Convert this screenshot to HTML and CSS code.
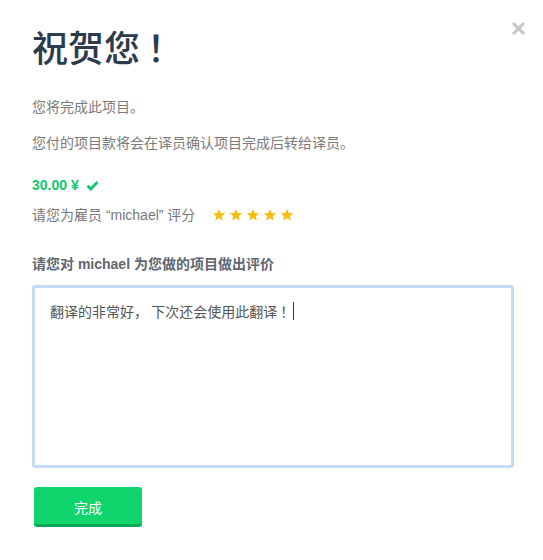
FILE: index.html
```html
<!DOCTYPE html>
<html lang="zh-CN">
<head>
<meta charset="utf-8">
<title>祝贺您</title>
<link rel="stylesheet" href="styles.css">
</head>
<body>
<div class="modal">
  <button class="close" aria-label="关闭">
    <svg width="13" height="13" viewBox="0 0 14 14"><path d="M2 2 L12 12 M12 2 L2 12" stroke="#c9c9c9" stroke-width="3.4" stroke-linecap="round"/></svg>
  </button>
  <h1 class="title">祝贺您<span class="bang">！</span></h1>
  <p class="text first">您将完成此项目。</p>
  <p class="text second">您付的项目款将会在译员确认项目完成后转给译员。</p>
  <div class="price">30.00 ¥
    <svg class="check" width="13" height="11" viewBox="0 0 13 11"><path d="M1.5 5.8 L4.8 9 L11.5 2" fill="none" stroke="#14c66b" stroke-width="2.8" stroke-linejoin="miter"/></svg>
  </div>
  <div class="rating">
    <span>请您为雇员 “michael” 评分</span>
    <span class="stars">
      <svg viewBox="0 0 24 24"><path d="M12 1.5l3.1 6.9 7.4.7-5.6 5 1.7 7.4L12 17.6l-6.6 3.9 1.7-7.4-5.6-5 7.4-.7z"/></svg>
      <svg viewBox="0 0 24 24"><path d="M12 1.5l3.1 6.9 7.4.7-5.6 5 1.7 7.4L12 17.6l-6.6 3.9 1.7-7.4-5.6-5 7.4-.7z"/></svg>
      <svg viewBox="0 0 24 24"><path d="M12 1.5l3.1 6.9 7.4.7-5.6 5 1.7 7.4L12 17.6l-6.6 3.9 1.7-7.4-5.6-5 7.4-.7z"/></svg>
      <svg viewBox="0 0 24 24"><path d="M12 1.5l3.1 6.9 7.4.7-5.6 5 1.7 7.4L12 17.6l-6.6 3.9 1.7-7.4-5.6-5 7.4-.7z"/></svg>
      <svg viewBox="0 0 24 24"><path d="M12 1.5l3.1 6.9 7.4.7-5.6 5 1.7 7.4L12 17.6l-6.6 3.9 1.7-7.4-5.6-5 7.4-.7z"/></svg>
    </span>
  </div>
  <div class="label">请您对 michael 为您做的项目做出评价</div>
  <div class="textarea"><span>翻译的非常好， 下次还会使用此翻译<span class="tbang">！</span></span><span class="caret"></span></div>
  <button class="done">完成</button>
</div>
</body>
</html>
```
FILE: styles.css
```css
html, body {
  margin: 0;
  padding: 0;
  background: #fff;
}
body {
  font-family: "Liberation Sans", "Noto Sans CJK SC", sans-serif;
  font-size: 14px;
  color: #777;
}
.modal {
  position: relative;
  padding: 24px 29px 0 32px;
  display: flex;
  flex-direction: column;
  align-items: flex-start;
}
.close {
  position: absolute;
  top: 22px;
  right: 18px;
  border: 0;
  background: none;
  padding: 0;
  width: 13px;
  height: 13px;
  display: block;
}
.close svg { display: block; }
.title {
  margin: 0;
  font-size: 36px;
  line-height: 44px;
  height: 44px;
  font-weight: 500;
  color: #2d3b4c;
  font-family: "Noto Sans CJK SC", sans-serif;
}
.bang {
  padding-left: 7px;
}
.tbang {
  padding-left: 3px;
}
.text {
  margin: 0;
  line-height: 20px;
  color: #7b7b7b;
  font-family: "Noto Sans CJK SC", sans-serif;
}
.first { margin-top: 28px; }
.second { margin-top: 16px; }
.price {
  margin-top: 23px;
  line-height: 20px;
  font-weight: bold;
  color: #14c66b;
  display: flex;
  align-items: center;
  gap: 7px;
}
.check { display: block; }
.rating {
  margin-top: 10px;
  line-height: 20px;
  display: flex;
  align-items: center;
  gap: 17px;
  color: #777;
}
.stars {
  display: flex;
  gap: 3px;
}
.stars svg {
  width: 14px;
  height: 14px;
  fill: #f7bf16;
  display: block;
}
.label {
  margin-top: 29px;
  line-height: 20px;
  font-weight: bold;
  color: #5f6670;
}
.textarea {
  margin-top: 11px;
  box-sizing: border-box;
  width: 482px;
  height: 183px;
  border: 3px solid #c3dbf4;
  border-radius: 3px;
  padding: 13px 15px;
  line-height: 20px;
  color: #555;
  font-family: "Noto Sans CJK SC", sans-serif;
  display: flex;
  align-items: flex-start;
}
.caret {
  display: inline-block;
  width: 1px;
  height: 18px;
  margin-top: 1px;
  margin-left: -1px;
  background: #333;
}
.done {
  margin-top: 19px;
  margin-left: 2px;
  width: 108px;
  height: 40px;
  box-sizing: border-box;
  border: 0;
  border-bottom: 3px solid #0aa956;
  border-radius: 3px;
  background: #10d46c;
  color: #fff;
  font-size: 14px;
  font-family: "Noto Sans CJK SC", sans-serif;
  padding: 0;
  padding-top: 2px;
}
```
